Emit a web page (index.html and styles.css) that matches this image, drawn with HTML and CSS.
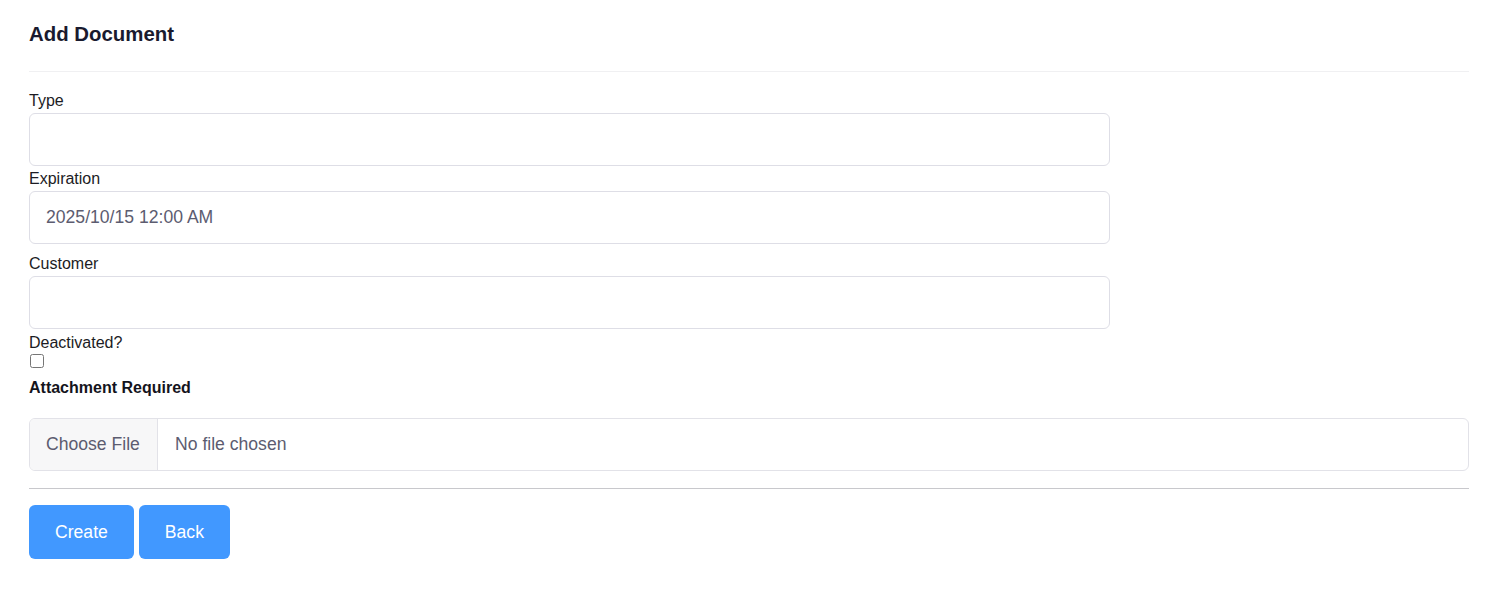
FILE: index.html
```html
<!DOCTYPE html>
<html lang="en">
<head>
<meta charset="utf-8">
<title>Add Document</title>
<link rel="stylesheet" href="styles.css">
</head>
<body>
<main class="page">
  <header class="page-header">
    <h2 class="title">Add Document</h2>
  </header>
  <form class="form">
    <div class="field">
      <label class="label" for="type">Type</label>
      <input class="input" id="type" type="text">
    </div>
    <div class="field field-date">
      <label class="label" for="exp">Expiration</label>
      <input class="input" id="exp" type="text" value="2025/10/15 12:00 AM">
    </div>
    <div class="field field-customer">
      <label class="label" for="cust">Customer</label>
      <input class="input" id="cust" type="text">
    </div>
    <div class="field field-check">
      <label class="label" for="deact">Deactivated?</label>
      <input class="checkbox" id="deact" type="checkbox">
    </div>
    <div class="attach-title">Attachment Required</div>
    <label class="file">
      <input class="file-input" type="file">
      <span class="file-btn">Choose File</span>
      <span class="file-name">No file chosen</span>
    </label>
    <hr class="divider">
    <div class="actions">
      <button type="button" class="btn">Create</button>
      <button type="button" class="btn">Back</button>
    </div>
  </form>
</main>
</body>
</html>
```
FILE: styles.css
```css
* { box-sizing: border-box; }

html, body {
  margin: 0;
  padding: 0;
  background: #ffffff;
}

body {
  font-family: "Liberation Sans", Arial, sans-serif;
  font-size: 16px;
  color: #1c1c24;
}

.page {
  width: 1440px;
  margin-left: 29px;
}

.page-header {
  padding-top: 22px;
  padding-bottom: 25px;
  border-bottom: 1px solid #f0f0f2;
}

.title {
  margin: 0;
  font-size: 20.4px;
  line-height: 24px;
  font-weight: 700;
  color: #1a1a2e;
}

.form {
  display: flex;
  flex-direction: column;
  padding-top: 20px;
}

.field {
  display: flex;
  flex-direction: column;
  margin-bottom: 4px;
}

.field-date {
  margin-bottom: 11px;
}

.field-customer {
  margin-bottom: 5px;
}

.label {
  display: block;
  font-size: 16px;
  line-height: 18px;
  margin-bottom: 3px;
  color: #1c1c24;
}

.input {
  width: 1081px;
  height: 53px;
  padding: 0 16px;
  border: 1px solid #dedee6;
  border-radius: 6px;
  background: #ffffff;
  font-family: "Liberation Sans", Arial, sans-serif;
  font-size: 17.6px;
  color: #5c5c70;
  outline: none;
}

.field-check .label {
  margin-bottom: 2px;
}

.checkbox {
  width: 14px;
  height: 14px;
  margin: 0 0 0 1px;
}

.attach-title {
  margin-top: 7px;
  font-size: 16px;
  line-height: 18px;
  font-weight: 700;
  color: #14141c;
}

.file {
  display: flex;
  align-items: stretch;
  margin-top: 21px;
  height: 53px;
  border: 1px solid #e2e2e8;
  border-radius: 6px;
  overflow: hidden;
  font-size: 17.6px;
  color: #5c5c70;
  cursor: pointer;
}

.file-input {
  display: none;
}

.file-btn {
  display: flex;
  align-items: center;
  width: 128px;
  padding-left: 16px;
  background: #f7f7f8;
  border-right: 1px solid #e2e2e8;
}

.file-name {
  display: flex;
  align-items: center;
  padding-left: 17px;
}

.divider {
  margin: 17px 0 16px;
  border: 0;
  border-top: 1px solid #c8c8cc;
  height: 0;
}

.actions {
  display: flex;
  gap: 5px;
}

.btn {
  height: 54px;
  padding: 0 26px;
  border: 0;
  border-radius: 6px;
  background: #4198ff;
  color: #ffffff;
  font-family: "Liberation Sans", Arial, sans-serif;
  font-size: 17.6px;
  cursor: pointer;
}
```
